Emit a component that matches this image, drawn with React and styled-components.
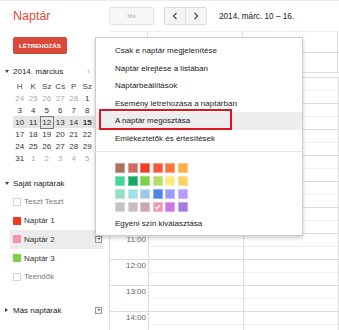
import React from 'react';
import styled, { createGlobalStyle } from 'styled-components';

const Global = createGlobalStyle`
  html, body { margin: 0; padding: 0; background: #fff; }
  body { font-family: "Liberation Sans", Arial, sans-serif; }
`;

const Page = styled.div`
  position: relative;
  width: 339px;
  height: 330px;
  overflow: hidden;
  box-sizing: border-box;
  border-top: 1px solid #ececec;
  display: flex;
  flex-direction: column;
  font-family: "Liberation Sans", Arial, sans-serif;
  font-size: 8px;
  color: #222;
  background: #fff;
`;

const Header = styled.div`
  height: 30px;
  display: flex;
  align-items: center;
  flex-shrink: 0;
`;

const Brand = styled.div`
  width: 109px;
  box-sizing: border-box;
  padding-left: 13px;
  font-size: 12.5px;
  color: #dd4b39;
`;

const TodayButton = styled.div`
  width: 45px;
  height: 18px;
  box-sizing: border-box;
  border: 1px solid #e3e3e3;
  border-radius: 2px;
  background: #f6f6f6;
  color: #b5b5b5;
  font-size: 6px;
  display: flex;
  align-items: center;
  justify-content: center;
`;

const NavGroup = styled.div`
  margin-left: 10px;
  width: 43px;
  height: 18px;
  box-sizing: border-box;
  border: 1px solid #dcdcdc;
  border-radius: 2px;
  background: #f5f5f5;
  display: flex;
`;

const NavButton = styled.div`
  flex: 1;
  display: flex;
  align-items: center;
  justify-content: center;
  border-left: ${p => (p.$divider ? '1px solid #dcdcdc' : 'none')};
`;

const RangeText = styled.div`
  margin-left: 12px;
  font-size: 8.2px;
  color: #222;
`;

const Body = styled.div`
  flex: 1;
  display: flex;
  min-height: 0;
`;

const Sidebar = styled.div`
  width: 109px;
  flex-shrink: 0;
  display: flex;
  flex-direction: column;
  & > * { flex-shrink: 0; }
`;

const CreateButton = styled.div`
  margin: 6px 0 0 13px;
  width: 54px;
  height: 17px;
  border-radius: 2px;
  background: #d9493a;
  color: #fff;
  font-weight: bold;
  font-size: 6.2px;
  display: flex;
  align-items: center;
  justify-content: center;
`;

const SectionRow = styled.div`
  margin-top: ${p => p.$mt}px;
  margin-right: ${p => p.$mr || 0}px;
  height: 12px;
  padding-left: 5px;
  display: flex;
  align-items: center;
  color: #222;
`;

const Caret = styled.span`
  width: 0;
  height: 0;
  margin-right: 4px;
  ${p =>
    p.$right
      ? `border-top: 2px solid transparent; border-bottom: 2px solid transparent; border-left: 3px solid #444; margin-right: 5px;`
      : `border-left: 2px solid transparent; border-right: 2px solid transparent; border-top: 3px solid #444;`}
`;

const PrevSmall = styled.span`
  margin-left: auto;
  margin-right: 19px;
  color: #999;
  font-size: 8px;
`;

const MiniCal = styled.div`
  margin: 3px 0 0 13px;
  display: flex;
  flex-direction: column;
  & > * { flex-shrink: 0; }
`;

const Week = styled.div`
  display: grid;
  grid-template-columns: repeat(7, 13.5px);
  height: 12px;
  background: ${p => (p.$selected ? '#e4e4e4' : 'transparent')};
`;

const DayCell = styled.div`
  display: flex;
  align-items: center;
  justify-content: center;
  box-sizing: border-box;
  color: ${p => (p.$muted ? '#aaa' : p.$head ? '#444' : '#333')};
  font-weight: ${p => (p.$bold ? 'bold' : 'normal')};
  border: ${p => (p.$today ? '1px solid #777' : '1px solid transparent')};
  height: ${p => (p.$today ? '13px' : 'auto')};
`;

const CalList = styled.div`
  margin-top: 3.6px;
  display: flex;
  flex-direction: column;
  & > * { flex-shrink: 0; }
`;

const CalItem = styled.div`
  height: 18.7px;
  margin: 0 6px 0 10px;
  padding: 0 1px 0 3px;
  display: flex;
  align-items: center;
  background: ${p => (p.$active ? '#ececec' : 'transparent')};
  color: ${p => (p.$dim ? '#7a7a7a' : '#333')};
`;

const Swatch = styled.span`
  width: 8px;
  height: 8px;
  margin-right: 3px;
  box-sizing: border-box;
  background: ${p => p.$color || '#fff'};
  border: 1px solid ${p => (p.$color ? p.$color : '#d4d4d4')};
`;

const DropButton = styled.span`
  margin-left: auto;
  width: 7px;
  height: 7px;
  box-sizing: border-box;
  border: 1px solid #9a9a9a;
  background: #f3f3f3;
  display: flex;
  align-items: center;
  justify-content: center;
  &::before {
    content: '';
    border-left: 1.5px solid transparent;
    border-right: 1.5px solid transparent;
    border-top: 2px solid #333;
  }
`;

const Main = styled.div`
  flex: 1;
  display: flex;
  flex-direction: column;
  min-width: 0;
  & > * { flex-shrink: 0; }
`;

const Columns = styled.div`
  display: grid;
  grid-template-columns: 38px 95px 95px 1fr;
`;

const DayHeads = styled(Columns)`
  height: 20px;
  border-top: 1px solid #eee;
`;

const AllDay = styled(Columns)`
  height: 19px;
  border-top: 1px solid #ddd;
  border-bottom: 1px solid #ddd;
  margin-bottom: 4px;
`;

const ColCell = styled.div`
  border-left: ${p => (p.$line ? '1px solid #ddd' : 'none')};
`;

const TimeGrid = styled.div`
  border-left: 1px solid #ddd;
  display: flex;
  flex-direction: column;
`;

const HourRow = styled(Columns)`
  height: 26px;
  flex-shrink: 0;
  box-sizing: border-box;
  border-top: 1px solid #ddd;
`;

const TimeLabel = styled.div`
  text-align: right;
  padding: 2px 2px 0 0;
  line-height: 8px;
  color: #666;
`;

const HourCell = styled.div`
  border-left: 1px solid #ddd;
  display: flex;
  flex-direction: column;
`;

const Half = styled.div`
  flex: 1;
  border-top: ${p => (p.$second ? '1px solid #f0f0f0' : 'none')};
`;

const Menu = styled.div`
  position: absolute;
  left: 95px;
  top: 36px;
  width: 208px;
  height: 199px;
  box-sizing: border-box;
  border: 1px solid rgba(0, 0, 0, 0.2);
  box-shadow: 0 2px 4px rgba(0, 0, 0, 0.2);
  background: #fff;
  padding: 4px 0 3px;
  display: flex;
  flex-direction: column;
  & > * { flex-shrink: 0; }
`;

const MenuItem = styled.div`
  height: 17.5px;
  line-height: 17.5px;
  padding-left: 19px;
  color: #222;
  white-space: nowrap;
  background: ${p => (p.$active ? '#eee' : 'transparent')};
  margin-top: ${p => p.$mt || 0}px;
`;

const Separator = styled.div`
  margin-top: 4px;
  border-top: 1px solid #e5e5e5;
`;

const Palette = styled.div`
  margin: 10.5px 0 0 19px;
  display: grid;
  grid-template-columns: repeat(6, 10px);
  column-gap: 2.6px;
  row-gap: 3px;
`;

const Chip = styled.div`
  width: 10px;
  height: 10px;
  box-sizing: border-box;
  background: ${p => p.$color};
  border: 1px solid rgba(255, 255, 255, 0.35);
  display: flex;
  align-items: center;
  justify-content: center;
`;

const Highlight = styled.div`
  position: absolute;
  left: 99px;
  top: 108px;
  width: 133px;
  height: 21px;
  box-sizing: border-box;
  border: 2.5px solid #e2141c;
`;

const Chevron = ({ dir }) => (
  <svg width="6" height="8" viewBox="0 0 6 8">
    <path
      d={dir === 'left' ? 'M4.5 0.8 L1.5 4 L4.5 7.2' : 'M1.5 0.8 L4.5 4 L1.5 7.2'}
      fill="none"
      stroke="#444"
      strokeWidth="1.2"
    />
  </svg>
);

const weekdays = ['H', 'K', 'Sz', 'Cs', 'P', 'Sz', 'V'];
const weeks = [
  [[24, 1], [25, 1], [26, 1], [27, 1], [28, 1], [1], [2]],
  [[3], [4], [5], [6], [7], [8], [9]],
  [[10], [11], [12, 0, 'today'], [13], [14], [15, 0, 'bold'], [16, 0, 'bold']],
  [[17], [18], [19], [20], [21], [22], [23]],
  [[24], [25], [26], [27], [28], [29], [30]],
  [[31], [1, 1], [2, 1], [3, 1], [4, 1], [5, 1], [6, 1]],
];

const palette = [
  '#ac725e', '#d06b64', '#f83a22', '#fa573c', '#ff7537', '#ffad46',
  '#42d692', '#16a765', '#7bd148', '#b3dc6c', '#fbe983', '#fad165',
  '#92e1c0', '#9fe1e7', '#9fc6e7', '#4986e7', '#9a9cff', '#b99aff',
  '#c2c2c2', '#cabdbf', '#cca6ac', '#f691b2', '#cd74e6', '#a47ae2',
];

const calendars = [
  { name: 'Teszt Teszt', dim: true },
  { name: 'Naptár 1', color: '#f4391f' },
  { name: 'Naptár 2', color: '#f691b2', active: true },
  { name: 'Naptár 3', color: '#7bd148' },
  { name: 'Teendők', dim: true },
];

// hours 5..10 lie beneath the open menu, so their labels are not shown
const hours = [5, 6, 7, 8, 9, 10, 11, 12, 13, 14];
const firstVisibleLabel = 11;

const menuItems = [
  'Csak e naptár megjelenítése',
  'Naptár elrejtése a listában',
  'Naptárbeállítások',
  'Esemény létrehozása a naptárban',
  'A naptár megosztása',
  'Emlékeztetők és értesítések',
];

export default function App() {
  return (
    <>
      <Global />
      <Page>
        <Header>
          <Brand>Naptár</Brand>
          <TodayButton>Ma</TodayButton>
          <NavGroup>
            <NavButton><Chevron dir="left" /></NavButton>
            <NavButton $divider><Chevron dir="right" /></NavButton>
          </NavGroup>
          <RangeText>2014. márc. 10 – 16.</RangeText>
        </Header>
        <Body>
          <Sidebar>
            <CreateButton>LÉTREHOZÁS</CreateButton>
            <SectionRow $mt={11}>
              <Caret />
              2014. március
              <PrevSmall>‹</PrevSmall>
            </SectionRow>
            <MiniCal>
              <Week>
                {weekdays.map((d, i) => (
                  <DayCell key={i} $head>{d}</DayCell>
                ))}
              </Week>
              {weeks.map((w, wi) => (
                <Week key={wi} $selected={wi === 2}>
                  {w.map(([n, muted, flag], di) => (
                    <DayCell
                      key={di}
                      $muted={!!muted}
                      $today={flag === 'today'}
                      $bold={flag === 'bold'}
                    >
                      {n}
                    </DayCell>
                  ))}
                </Week>
              ))}
            </MiniCal>
            <SectionRow $mt={13}>
              <Caret />
              Saját naptárak
            </SectionRow>
            <CalList>
              {calendars.map(c => (
                <CalItem key={c.name} $active={c.active} $dim={c.dim}>
                  <Swatch $color={c.color} />
                  {c.name}
                  {c.active && <DropButton />}
                </CalItem>
              ))}
            </CalList>
            <SectionRow $mt={18} $mr={7}>
              <Caret $right />
              Más naptárak
              <DropButton />
            </SectionRow>
          </Sidebar>
          <Main>
            <DayHeads>
              <ColCell />
              <ColCell $line />
              <ColCell $line />
              <ColCell $line />
            </DayHeads>
            <AllDay>
              <ColCell />
              <ColCell $line />
              <ColCell $line />
              <ColCell $line />
            </AllDay>
            <TimeGrid>
              {hours.map(h => (
                <HourRow key={h}>
                  <TimeLabel>{h >= firstVisibleLabel ? `${h}:00` : ''}</TimeLabel>
                  {[0, 1, 2].map(c => (
                    <HourCell key={c}>
                      <Half />
                      <Half $second />
                    </HourCell>
                  ))}
                </HourRow>
              ))}
            </TimeGrid>
          </Main>
        </Body>
        <Menu>
          {menuItems.map((m, i) => (
            <MenuItem key={m} $active={i === 4}>{m}</MenuItem>
          ))}
          <Separator />
          <Palette>
            {palette.map((c, i) => (
              <Chip key={i} $color={c}>
                {i === 21 && (
                  <svg width="7" height="6" viewBox="0 0 7 6">
                    <path d="M1 3 L2.8 4.8 L6 1.2" fill="none" stroke="#fff" strokeWidth="1.3" />
                  </svg>
                )}
              </Chip>
            ))}
          </Palette>
          <MenuItem $mt={3}>Egyéni szín kiválasztása</MenuItem>
        </Menu>
        <Highlight />
      </Page>
    </>
  );
}
